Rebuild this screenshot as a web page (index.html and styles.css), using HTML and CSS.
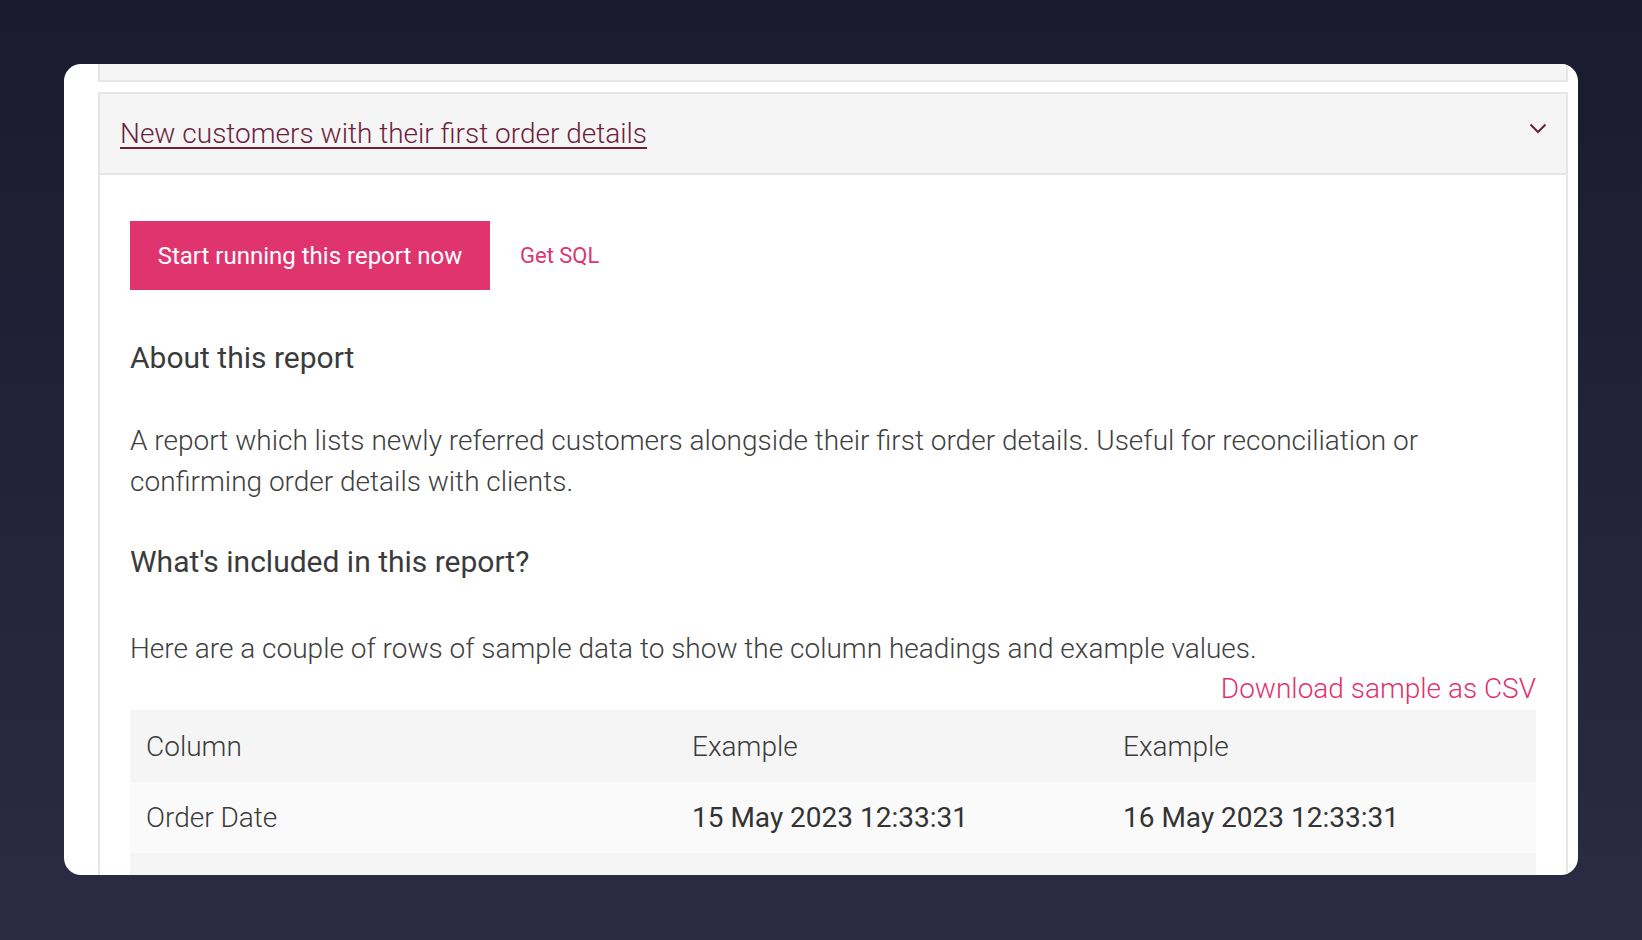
FILE: index.html
```html
<!DOCTYPE html>
<html lang="en">
<head>
<meta charset="utf-8">
<title>Report</title>
<link rel="stylesheet" href="styles.css">
</head>
<body>
<div class="card">
  <div class="prev-panel"></div>
  <div class="panel">
    <div class="panel-header">
      <a class="panel-title" href="#">New customers with their first order details</a>
      <svg class="chevron" width="18" height="11" viewBox="0 0 18 11"><polyline points="1.5,1.5 9,9 16.5,1.5" fill="none" stroke="#6e1f3e" stroke-width="2"/></svg>
    </div>
    <div class="panel-body">
      <div class="actions">
        <a class="btn" href="#">Start running this report now</a>
        <a class="link" href="#">Get SQL</a>
      </div>
      <h2 class="heading h-about">About this report</h2>
      <p class="text p-about">A report which lists newly referred customers alongside their first order details. Useful for reconciliation or confirming order details with clients.</p>
      <h2 class="heading h-incl">What's included in this report?</h2>
      <p class="text p-here">Here are a couple of rows of sample data to show the column headings and example values.</p>
      <div class="download"><a class="dl-link" href="#">Download sample as CSV</a></div>
      <div class="table">
        <div class="row head first">
          <div class="cell">Column</div>
          <div class="cell">Example</div>
          <div class="cell">Example</div>
        </div>
        <div class="row alt">
          <div class="cell">Order Date</div>
          <div class="cell val">15 May 2023 12:33:31</div>
          <div class="cell val">16 May 2023 12:33:31</div>
        </div>
        <div class="row head"></div>
      </div>
    </div>
  </div>
</div>
</body>
</html>
```

FILE: styles.css
```css
html, body {
  margin: 0;
  padding: 0;
  height: 100%;
}
body {
  background: linear-gradient(180deg, #1b1b2e 0%, #222339 50%, #2b2c43 100%);
  font-family: Roboto, "Liberation Sans", sans-serif;
  overflow: hidden;
  padding-top: 64px;
  padding-left: 64px;
  box-sizing: border-box;
}
.card {
  width: 1514px;
  height: 811px;
  background: #ffffff;
  border-radius: 17px;
  overflow: hidden;
  box-sizing: border-box;
  padding: 0 10px 0 34px;
}
.prev-panel {
  height: 16px;
  background: #f5f5f5;
  border: 2px solid #e6e6e6;
  border-top: 0;
}
.panel {
  margin-top: 10px;
  border: 2px solid #e6e6e6;
  border-bottom: 0;
  height: 800px;
}
.panel-header {
  height: 79px;
  background: #f5f5f5;
  border-bottom: 2px solid #e6e6e6;
  display: flex;
  align-items: center;
  justify-content: space-between;
  padding: 0 19px 0 20px;
}
.panel-title {
  font-size: 28px;
  font-weight: 300;
  line-height: 36px;
  color: #6e1f3e;
  text-decoration: underline;
  text-decoration-thickness: 2px;
  text-underline-offset: 4px;
}
.chevron {
  margin-bottom: 11px;
}
.panel-body {
  padding: 46px 30px 0 30px;
}
.actions {
  display: flex;
  align-items: center;
  gap: 30px;
}
.btn {
  display: flex;
  align-items: center;
  justify-content: center;
  width: 360px;
  height: 69px;
  background: #e0346f;
  color: #ffffff;
  font-size: 24px;
  font-weight: 400;
  text-decoration: none;
}
.link {
  color: #e0346f;
  font-size: 22px;
  text-decoration: none;
}
.heading {
  margin: 0;
  font-size: 30px;
  font-weight: 400;
  line-height: 40px;
  color: #3b3b3b;
}
.text {
  margin: 0;
  font-size: 28px;
  font-weight: 300;
  line-height: 41px;
  color: #404040;
}
.h-about { margin-top: 48px; }
.p-about { margin-top: 42px; }
.h-incl { margin-top: 40px; }
.p-here { margin-top: 46px; }
.download {
  text-align: right;
  font-size: 28px;
  line-height: 40px;
}
.dl-link {
  color: #e0346f;
  font-weight: 300;
  text-decoration: none;
}
.table {
  margin-top: 1px;
}
.row {
  display: grid;
  grid-template-columns: 546px 431px 1fr;
  height: 71px;
  align-items: center;
}
.row.head { background: #f5f5f5; }
.row.alt { background: #fafafb; }
.row.first { height: 72px; }
.cell {
  padding-left: 16px;
  font-size: 28px;
  font-weight: 300;
  color: #3b3b3b;
}
.cell.val {
  font-weight: 400;
  color: #333333;
}
```
